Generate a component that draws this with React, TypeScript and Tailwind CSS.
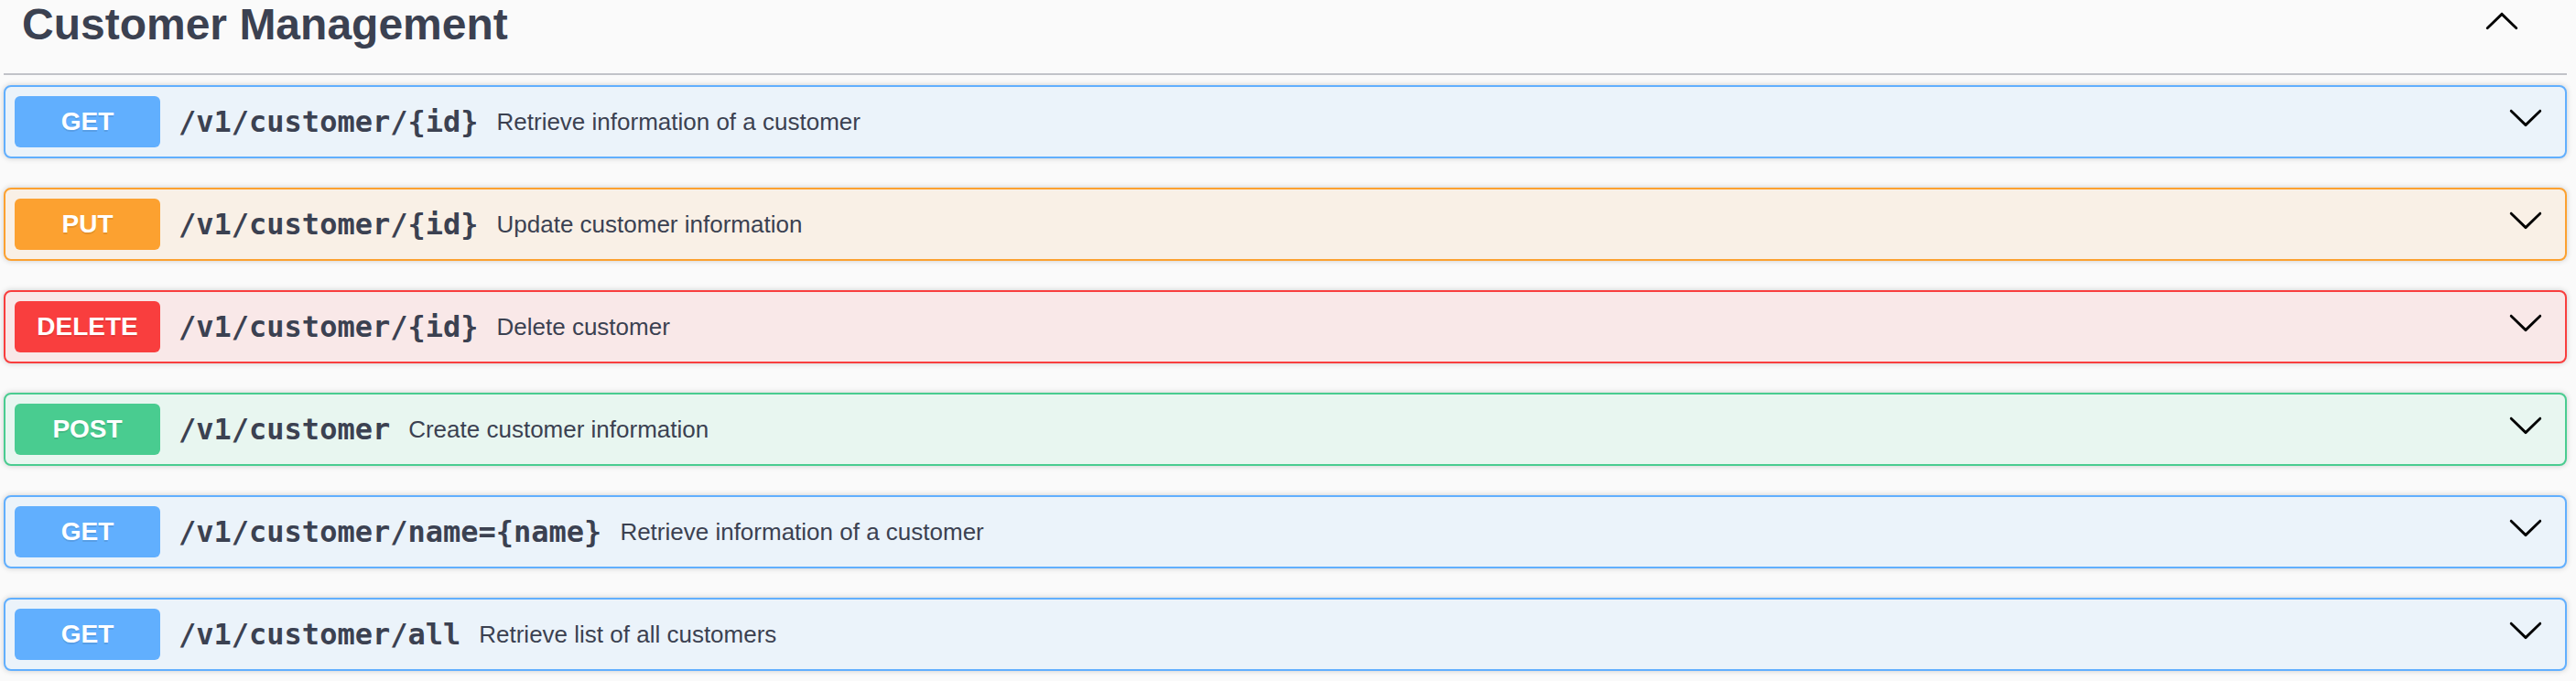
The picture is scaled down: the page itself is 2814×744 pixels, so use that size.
import React from "react";

type Op = {
  method: "GET" | "PUT" | "DELETE" | "POST";
  path: string;
  summary: string;
};

const ops: Op[] = [
  { method: "GET", path: "/v1/customer/{id}", summary: "Retrieve information of a customer" },
  { method: "PUT", path: "/v1/customer/{id}", summary: "Update customer information" },
  { method: "DELETE", path: "/v1/customer/{id}", summary: "Delete customer" },
  { method: "POST", path: "/v1/customer", summary: "Create customer information" },
  { method: "GET", path: "/v1/customer/name={name}", summary: "Retrieve information of a customer" },
  { method: "GET", path: "/v1/customer/all", summary: "Retrieve list of all customers" },
];

const styles: Record<Op["method"], { box: string; badge: string }> = {
  GET: { box: "border-[#61affe] bg-[#ebf3fa]", badge: "bg-[#61affe]" },
  PUT: { box: "border-[#fca130] bg-[#f9f0e6]", badge: "bg-[#fca130]" },
  DELETE: { box: "border-[#f93e3e] bg-[#f9e8e8]", badge: "bg-[#f93e3e]" },
  POST: { box: "border-[#49cc90] bg-[#e8f6f0]", badge: "bg-[#49cc90]" },
};

function Chevron({ up = false }: { up?: boolean }) {
  return (
    <svg
      viewBox="0 0 20 20"
      className={"h-[40px] w-[40px] fill-black " + (up ? "rotate-180" : "")}
    >
      <path d="M17.418 6.109c.272-.268.709-.268.979 0s.271.701 0 .969l-7.908 7.83c-.27.268-.707.268-.979 0l-7.908-7.83c-.27-.268-.27-.701 0-.969.271-.268.709-.268.979 0L10 13.25l7.418-7.141z" />
    </svg>
  );
}

function OpBlock({ op }: { op: Op }) {
  const s = styles[op.method];
  return (
    <div
      className={
        "flex items-start rounded-[8px] border-2 p-[10px] shadow-[0_0_6px_rgba(0,0,0,0.19)] " +
        s.box
      }
    >
      <span
        className={
          "flex h-[56px] w-[159px] shrink-0 items-center justify-center rounded-[6px] font-['Liberation_Sans',Arial,sans-serif] text-[28px] font-bold leading-none text-white [text-shadow:0_2px_0_rgba(0,0,0,0.1)] " +
          s.badge
        }
      >
        {op.method}
      </span>
      <div className="flex h-[56px] flex-1 items-center">
        <span className="px-[20px] font-['DejaVu_Sans_Mono',monospace] text-[32px] font-bold leading-none text-[#3b4151]">
          {op.path}
        </span>
        <span className="font-['Liberation_Sans',Arial,sans-serif] text-[26px] leading-none text-[#3b4151]">
          {op.summary}
        </span>
      </div>
      <span className="mr-[13px] mt-[3px]">
        <Chevron />
      </span>
    </div>
  );
}

export default function App() {
  return (
    <div className="h-[744px] w-full overflow-hidden bg-[#fafafa]">
      <div className="w-[2804px] pl-[4px]">
        <div className="flex h-[82px] items-start justify-between border-b-2 border-[#c1c3c8] pl-[20px] pr-[51px]">
          <h3 className="pt-[3px] font-['Liberation_Sans',Arial,sans-serif] text-[48px] font-bold leading-none text-[#3b4151]">
            Customer Management
          </h3>
          <span className="mt-[4px]">
            <Chevron up />
          </span>
        </div>
        <div className="mt-[11px] flex flex-col gap-[32px]">
          {ops.map((op, i) => (
            <OpBlock key={i} op={op} />
          ))}
        </div>
      </div>
    </div>
  );
}
